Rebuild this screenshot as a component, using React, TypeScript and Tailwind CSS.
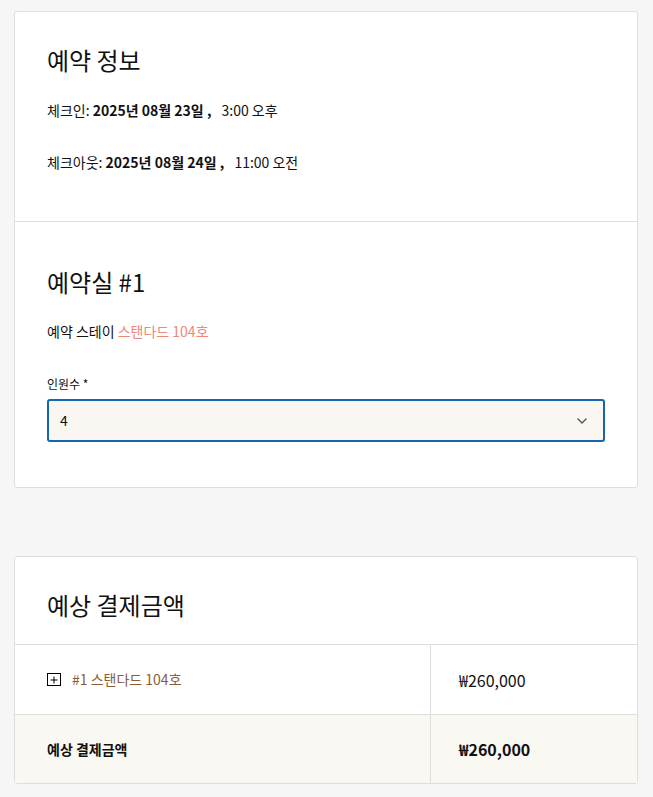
import React from "react";

export default function App() {
  return (
    <div
      className="min-h-[797px] bg-[#f6f6f6] px-[14px] pt-[11px] pb-[14px] text-[#111]"
      style={{ fontFamily: '"Noto Sans CJK KR", "Noto Sans", sans-serif' }}
    >
      <div className="w-[624px] rounded-[3px] border border-[#dedede] bg-white">
        <section className="border-b border-[#dedede] px-[32px] pt-[30px] pb-[49px]">
          <h2 className="text-[24px] leading-[36px] font-normal">예약 정보</h2>
          <p className="mt-[22px] text-[14px] leading-[20px]">
            체크인: <b className="font-bold">2025년 08월 23일 ,</b>
            <span className="ml-[10px]">3:00 오후</span>
          </p>
          <p className="mt-[32px] text-[14px] leading-[20px]">
            체크아웃: <b className="font-bold">2025년 08월 24일 ,</b>
            <span className="ml-[10px]">11:00 오전</span>
          </p>
        </section>
        <section className="px-[32px] pt-[42px] pb-[45px]">
          <h2 className="text-[24px] leading-[36px] font-normal">예약실 #1</h2>
          <p className="mt-[21px] text-[14px] leading-[20px]">
            예약 스테이 <span className="text-[#f0877a]">스탠다드 104호</span>
          </p>
          <label className="mt-[34px] block text-[12px] leading-[18px]">인원수 *</label>
          <div className="mt-[6px] flex h-[43px] items-center justify-between rounded-[3px] border-2 border-[#1565b0] bg-[#faf7f2] pl-[11px] pr-[16px]">
            <span className="text-[14px]">4</span>
            <svg width="10" height="6" viewBox="0 0 10 6" fill="none">
              <path d="M1 1l4 4 4-4" stroke="#555" strokeWidth="1.4" strokeLinecap="round" strokeLinejoin="round" />
            </svg>
          </div>
        </section>
      </div>

      <div className="mt-[68px] w-[624px] rounded-[3px] border border-[#dedede] bg-white">
        <div className="border-b border-[#dedede] px-[32px] pt-[30px] pb-[21px]">
          <h2 className="text-[24px] leading-[36px] font-normal">예상 결제금액</h2>
        </div>
        <div className="grid grid-cols-[416px_1fr]">
          <div className="flex h-[70px] items-center border-r border-b border-[#dedede] pl-[32px]">
            <span className="flex h-[13px] w-[14px] items-center justify-center border border-black">
              <svg width="8" height="8" viewBox="0 0 8 8">
                <path d="M4 0.5v7M0.5 4h7" stroke="#000" strokeWidth="1" />
              </svg>
            </span>
            <span className="ml-[11px] text-[14px] text-[#8a5c3a]">#1 스탠다드 104호</span>
          </div>
          <div className="flex h-[70px] items-center border-b border-[#dedede] pl-[28px] text-[16px]">
            ₩260,000
          </div>
          <div className="flex h-[68px] items-center border-r border-[#dedede] bg-[#faf8f3] pl-[32px] text-[14px] font-bold">
            예상 결제금액
          </div>
          <div className="flex h-[68px] items-center bg-[#faf8f3] pl-[28px] text-[16px] font-bold">
            ₩260,000
          </div>
        </div>
      </div>
    </div>
  );
}
